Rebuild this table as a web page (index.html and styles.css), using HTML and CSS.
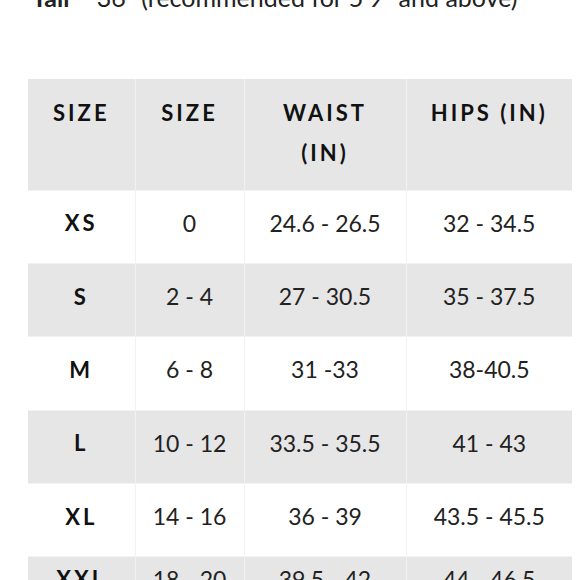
FILE: index.html
```html
<!DOCTYPE html>
<html>
<head>
<meta charset="utf-8">
<link rel="stylesheet" href="styles.css">
</head>
<body>
<div class="page">
  <p class="note"><b>Tall</b> – 36" (recommended for 5'9" and above)</p>
  <table class="chart">
    <colgroup>
      <col class="c1"><col class="c2"><col class="c3"><col class="c4">
    </colgroup>
    <thead>
      <tr class="head">
        <th>SIZE</th><th>SIZE</th><th>WAIST<br>(IN)</th><th>HIPS (IN)</th>
      </tr>
    </thead>
    <tbody>
      <tr><td class="lbl">XS</td><td>0</td><td>24.6 - 26.5</td><td>32 - 34.5</td></tr>
      <tr class="alt"><td class="lbl">S</td><td>2 - 4</td><td>27 - 30.5</td><td>35 - 37.5</td></tr>
      <tr><td class="lbl">M</td><td>6 - 8</td><td>31 -33</td><td>38-40.5</td></tr>
      <tr class="alt"><td class="lbl">L</td><td>10 - 12</td><td>33.5 - 35.5</td><td>41 - 43</td></tr>
      <tr><td class="lbl">XL</td><td>14 - 16</td><td>36 - 39</td><td>43.5 - 45.5</td></tr>
      <tr class="alt last"><td class="lbl">XXL</td><td>18 - 20</td><td>39.5 - 42</td><td>44 - 46.5</td></tr>
    </tbody>
  </table>
</div>
</body>
</html>
```

FILE: styles.css
```css
html, body {
  margin: 0;
  padding: 0;
  background: #ffffff;
  overflow: hidden;
}

.page {
  width: 580px;
  height: 580px;
  overflow: hidden;
  font-family: Lato, "Open Sans", sans-serif;
  color: #1a1a1a;
}

.note {
  margin: -17px 0 0 32px;
  font-size: 25px;
  line-height: 28px;
  white-space: nowrap;
  color: #222;
}

.note b {
  font-weight: 700;
}

.chart {
  margin: 68px 0 0 28px;
  width: 544px;
  border-collapse: collapse;
  table-layout: fixed;
}

.c1 { width: 107px; }
.c2 { width: 109px; }
.c3 { width: 162px; }
.c4 { width: 166px; }

.chart th,
.chart td {
  padding: 0;
  text-align: center;
  border: 0;
}

.chart th + th,
.chart td + td {
  border-left: 1px solid #f2f2f2;
}

.chart tr + tr td,
.chart tbody tr:first-child td {
  border-top: 1px solid #f2f2f2;
}

.head th {
  background: #e6e6e6;
  height: 111px;
  vertical-align: top;
  padding-top: 14px;
  box-sizing: border-box;
  font-size: 22px;
  font-weight: 700;
  letter-spacing: 3px;
  line-height: 40px;
  color: #111;
}

.chart td {
  height: 73.4px;
  vertical-align: middle;
  padding-bottom: 8px;
  box-sizing: border-box;
  font-size: 23px;
  font-weight: 400;
  color: #222;
}

.chart td.lbl {
  font-weight: 700;
  letter-spacing: 3px;
  font-size: 22px;
  color: #111;
}

.alt td {
  background: #e6e6e6;
}

.chart .last td {
  vertical-align: top;
  padding: 8px 0 0;
}
```
